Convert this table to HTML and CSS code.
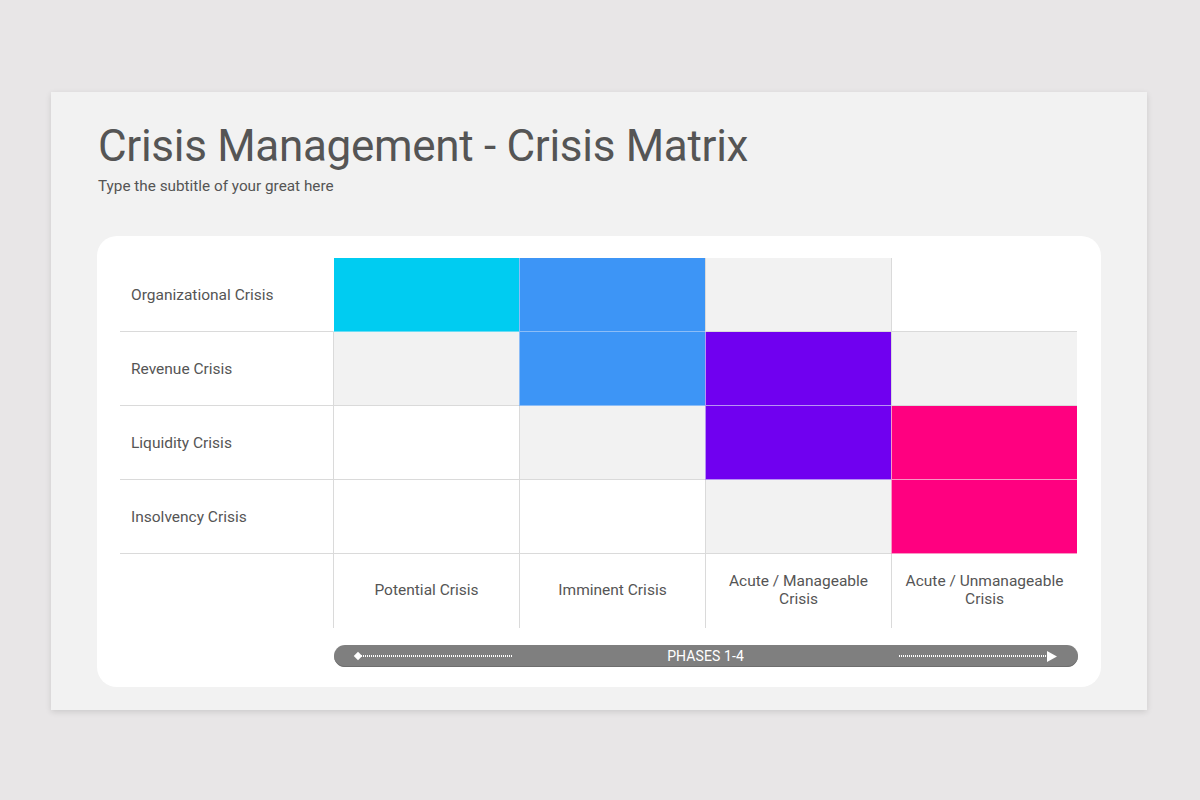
FILE: index.html
```html
<!DOCTYPE html>
<html>
<head>
<meta charset="utf-8">
<link rel="stylesheet" href="styles.css">
</head>
<body>
<div class="slide">
  <h1 class="title">Crisis Management - Crisis Matrix</h1>
  <p class="subtitle">Type the subtitle of your great here</p>
  <div class="card">
    <div class="matrix">
      <div class="label line">Organizational Crisis</div>
      <div class="cell line c-cyan"></div>
      <div class="cell line c-blue"></div>
      <div class="cell line c-grey"></div>
      <div class="cell line c-white"></div>

      <div class="label line">Revenue Crisis</div>
      <div class="cell line c-grey"></div>
      <div class="cell line c-blue"></div>
      <div class="cell line c-purple"></div>
      <div class="cell line c-grey"></div>

      <div class="label line">Liquidity Crisis</div>
      <div class="cell line c-white"></div>
      <div class="cell line c-grey"></div>
      <div class="cell line c-purple"></div>
      <div class="cell line c-pink"></div>

      <div class="label line">Insolvency Crisis</div>
      <div class="cell line c-white"></div>
      <div class="cell line c-white"></div>
      <div class="cell line c-grey"></div>
      <div class="cell line c-pink"></div>

      <div class="label"></div>
      <div class="cell head">Potential Crisis</div>
      <div class="cell head">Imminent Crisis</div>
      <div class="cell head">Acute / Manageable<br>Crisis</div>
      <div class="cell head">Acute / Unmanageable<br>Crisis</div>
    </div>
    <div class="phases">
      <div class="seg">
        <span class="diamond"></span>
        <span class="dots"></span>
      </div>
      <span class="phase-text">PHASES 1-4</span>
      <div class="seg">
        <span class="dots"></span>
        <svg class="arrow" width="10" height="11" viewBox="0 0 10 11"><polygon points="0,0 10,5.5 0,11" fill="#fff"/></svg>
      </div>
    </div>
  </div>
</div>
</body>
</html>
```

FILE: styles.css
```css
html, body {
  margin: 0;
  padding: 0;
}
body {
  background: #e8e6e7;
  width: 1200px;
  height: 800px;
  overflow: hidden;
  font-family: Roboto, "Liberation Sans", sans-serif;
  color: #555555;
}
.slide {
  margin: 92px 0 0 51px;
  width: 1096px;
  height: 618px;
  box-sizing: border-box;
  padding: 27px 46px 0 46px;
  background: #f2f2f2;
  box-shadow: 0 2px 6px rgba(0, 0, 0, 0.12);
}
.title {
  margin: 0;
  font-size: 44px;
  line-height: 54px;
  letter-spacing: -0.3px;
  font-weight: 400;
  color: #555555;
  padding-left: 1px;
}
.subtitle {
  margin: 4px 0 0 0;
  font-size: 15.3px;
  line-height: 19px;
  color: #555555;
  padding-left: 1px;
}
.card {
  margin-top: 40px;
  width: 1004px;
  height: 451px;
  box-sizing: border-box;
  padding: 22px 23px 20px 23px;
  background: #ffffff;
  border-radius: 20px;
}
.matrix {
  display: grid;
  grid-template-columns: 213px repeat(4, 186px);
  grid-template-rows: repeat(5, 74px);
}
.label {
  display: flex;
  align-items: center;
  padding-left: 11px;
  font-size: 15.5px;
  box-sizing: border-box;
  padding-top: 1px;
}
.line {
  border-bottom: 1px solid #dadada;
}
.cell {
  box-sizing: border-box;
  border-left: 1px solid #dadada;
}
.head {
  display: flex;
  align-items: center;
  justify-content: center;
  text-align: center;
  font-size: 15.5px;
  line-height: 18px;
  padding-bottom: 2px;
}
.c-cyan { background: #00ccf1; border-color: #6bdcf3; border-left-color: #ffffff; }
.c-blue { background: #3d95f6; border-color: #8cbdf7; }
.c-purple { background: #7000f0; border-color: #b893f3; }
.c-pink { background: #ff0080; border-color: #f897c4; }
.c-grey { background: #f2f2f2; }
.c-white { background: #ffffff; }
.matrix > .cell:nth-child(3) { border-left-color: #8cbdf7; }
.phases {
  margin-top: 17px;
  margin-left: 214px;
  width: 744px;
  height: 22px;
  box-sizing: border-box;
  border-radius: 11px;
  background: #7f7f7f;
  box-shadow: inset 0 -1px 0 #6e6e6e;
  display: flex;
  align-items: center;
  justify-content: space-between;
  padding: 0 21px 0 20px;
}
.seg {
  width: 158px;
  display: flex;
  align-items: center;
}
.diamond {
  width: 6px;
  height: 6px;
  background: #ffffff;
  transform: rotate(45deg);
  flex: none;
  margin-left: 1px;
}
.dots {
  flex: 1;
  height: 2px;
  background: repeating-linear-gradient(to right, #ffffff 0 1px, transparent 1px 2px);
}
.arrow {
  flex: none;
  display: block;
}
.phase-text {
  color: #ffffff;
  font-size: 14px;
  line-height: 22px;
  letter-spacing: 0.1px;
}
```
